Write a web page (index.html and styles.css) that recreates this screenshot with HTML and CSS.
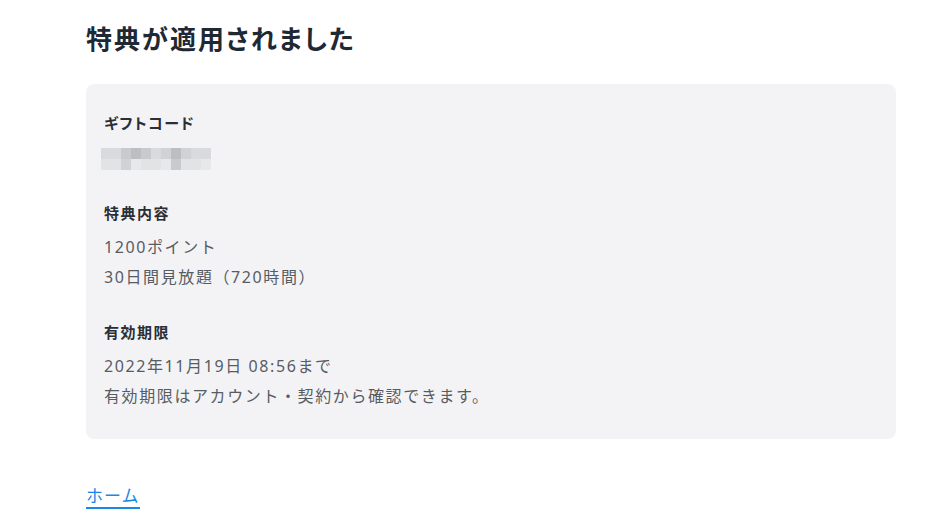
FILE: index.html
```html
<!doctype html>
<html lang="ja">
  <head>
    <meta charset="UTF-8" />
    <meta name="viewport" content="width=device-width, initial-scale=1.0" />
    <title>特典が適用されました</title>
    <link rel="stylesheet" href="styles.css">
  </head>
  <body>
    <main class="page">
      <h1 class="page-title">特典が適用されました</h1>

      <!-- Applied benefit summary -->
      <section class="result-card">
        <div class="result-item">
          <h2 class="item-label">ギフトコード</h2>
          <div class="item-value">
            <div class="masked-code" aria-label="非表示のギフトコード">
              <span class="px s1"></span><span class="px s1"></span><span class="px s3"></span><span class="px s4"></span><span class="px s3"></span><span class="px s1"></span><span class="px s2"></span><span class="px s4"></span><span class="px s2"></span><span class="px s1"></span><span class="px s1"></span>
              <span class="px s5"></span><span class="px s5"></span><span class="px s2"></span><span class="px s6"></span><span class="px s5"></span><span class="px s5"></span><span class="px s6"></span><span class="px s3"></span><span class="px s5"></span><span class="px s5"></span><span class="px s6"></span>
            </div>
          </div>
        </div>

        <div class="result-item">
          <h2 class="item-label">特典内容</h2>
          <p class="item-value">1200ポイント</p>
          <p class="item-value">30日間見放題（720時間）</p>
        </div>

        <div class="result-item">
          <h2 class="item-label">有効期限</h2>
          <p class="item-value">2022年11月19日 08:56まで</p>
          <p class="item-value">有効期限はアカウント・契約から確認できます。</p>
        </div>
      </section>

      <div class="page-footer">
        <a class="home-link" href="#">ホーム</a>
      </div>
    </main>
  </body>
</html>
```

FILE: styles.css
```css
body {
  margin: 0;
  background: #ffffff;
  font-family: 'Noto Sans CJK JP', 'Noto Sans', sans-serif;
  color: #1f2933;
}

.page {
  width: 810px;
  margin: 0 0 0 86px;
  padding-top: 20px;
}

.page-title {
  margin: 0;
  font-size: 26px;
  line-height: 36px;
  font-weight: 700;
  letter-spacing: 2px;
  font-feature-settings: 'palt';
  color: #1f2933;
}

/* Card */
.result-card {
  margin-top: 28px;
  padding: 27px 18px 28px;
  background: #f3f3f5;
  border-radius: 8px;
  display: flex;
  flex-direction: column;
  gap: 28px;
}

.item-label {
  margin: 0 0 7px 0;
  font-size: 15px;
  line-height: 24px;
  font-weight: 700;
  letter-spacing: 0.1em;
  font-feature-settings: 'palt';
  color: #2a2f36;
}

.item-value {
  margin: 0;
  font-family: 'Noto Sans', 'Noto Sans CJK JP', sans-serif;
  font-size: 16px;
  line-height: 30px;
  letter-spacing: 1.6px;
  color: #575c63;
}

/* Pixelated, hidden gift code */
.masked-code {
  display: grid;
  grid-template-columns: repeat(11, 10px);
  grid-auto-rows: 11px;
  width: 110px;
  margin: 13px 0 3px -3px;
}

.px { display: block; }
.s1 { background: #d9dadd; }
.s2 { background: #d1d2d5; }
.s3 { background: #c9cacd; }
.s4 { background: #bcbec1; }
.s5 { background: #e2e3e5; }
.s6 { background: #e7e8ea; }

/* Footer link */
.page-footer {
  display: flex;
  margin-top: 44px;
  padding-bottom: 12px;
}

.home-link {
  display: block;
  font-size: 17px;
  line-height: 24px;
  letter-spacing: 1px;
  color: #1a88e6;
  text-decoration: none;
  border-bottom: 2px solid #1a88e6;
}
```
